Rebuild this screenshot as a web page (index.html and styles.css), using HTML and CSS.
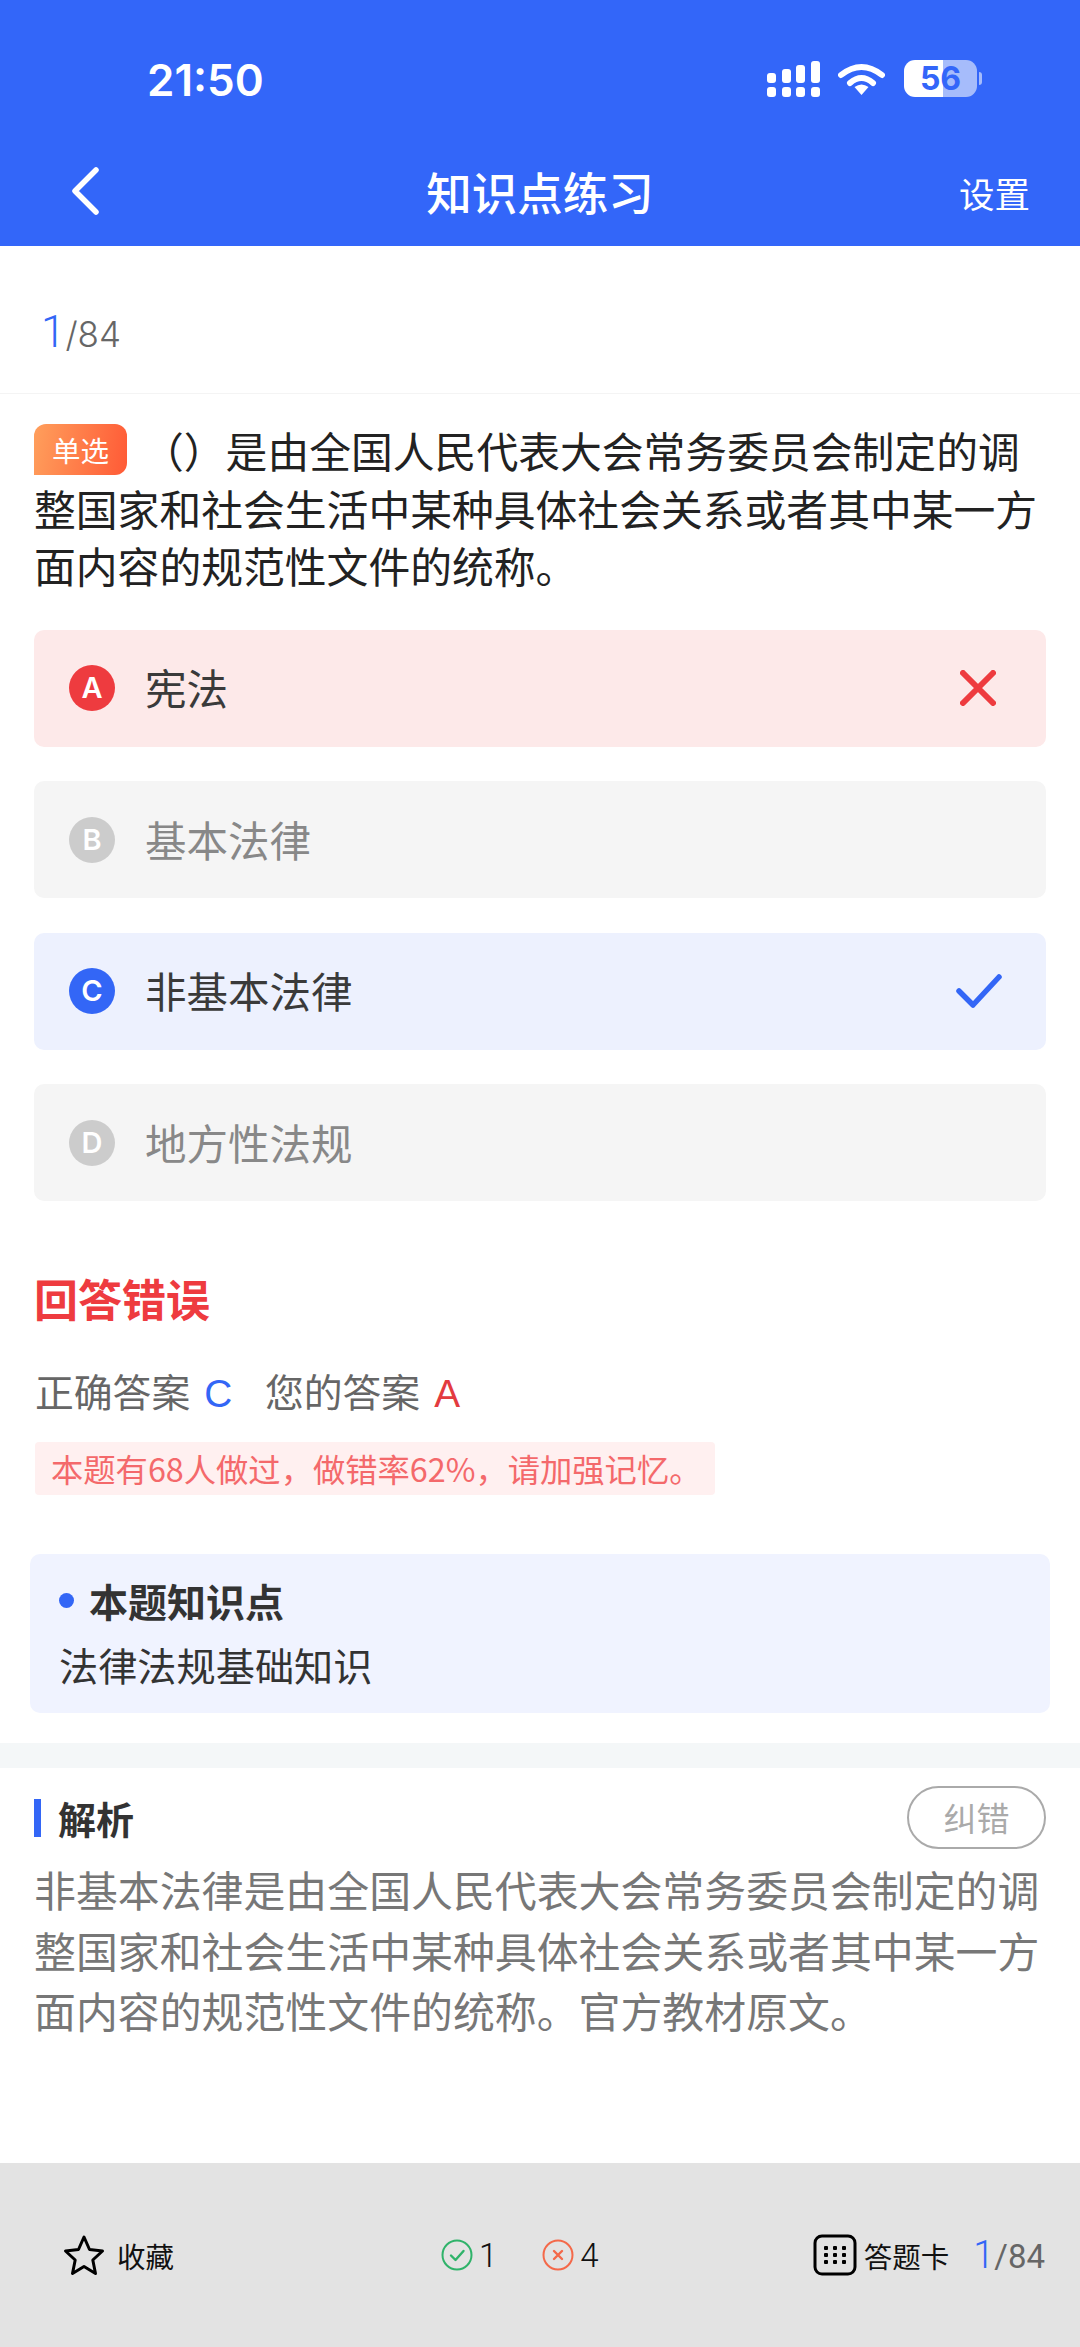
FILE: index.html
```html
<!DOCTYPE html>
<html>
<head>
    <title>知识点练习</title>
    <link rel="stylesheet" href="styles.css">
</head>
<body>
    <div class="page">
        <div class="header">
            <div class="status">
                <span class="time">21:50</span>
                <div class="status-icons">
                    <div class="signal">
                        <div class="signal-row tall">
                            <i class="h1"></i><i class="h2"></i><i class="h3"></i><i class="h4"></i>
                        </div>
                        <div class="signal-row">
                            <i></i><i></i><i></i><i></i>
                        </div>
                    </div>
                    <svg class="wifi" viewBox="0 0 47 33">
                        <path d="M3 13 Q23.5 -3 44 13" fill="none" stroke="#fff" stroke-width="6" stroke-linecap="round"/>
                        <path d="M12 21 Q23.5 11 35 21" fill="none" stroke="#fff" stroke-width="6" stroke-linecap="round"/>
                        <path d="M16.5 25 Q23.5 20 30.5 25 L23.5 33 Z" fill="#fff"/>
                    </svg>
                    <div class="battery"><span>56</span></div>
                    <div class="battery-tip"></div>
                </div>
            </div>
            <div class="nav">
                <svg class="back" viewBox="0 0 30 48">
                    <path d="M26 3 L5 24 L26 45" fill="none" stroke="#fff" stroke-width="5.5" stroke-linecap="round" stroke-linejoin="round"/>
                </svg>
                <div class="nav-title">知识点练习</div>
                <div class="nav-right">设置</div>
            </div>
        </div>

        <div class="counter"><span class="cur">1</span>/84</div>

        <div class="question"><span class="tag">单选</span>（）是由全国人民代表大会常务委员会制定的调整国家和社会生活中某种具体社会关系或者其中某一方面内容的规范性文件的统称。</div>

        <div class="options">
            <div class="option wrong">
                <span class="badge">A</span>
                <span class="option-text">宪法</span>
                <svg class="mark" viewBox="0 0 36 36">
                    <path d="M3 3 L33 33 M33 3 L3 33" fill="none" stroke="#ee3b3f" stroke-width="6" stroke-linecap="round"/>
                </svg>
            </div>
            <div class="option muted">
                <span class="badge">B</span>
                <span class="option-text">基本法律</span>
            </div>
            <div class="option right">
                <span class="badge">C</span>
                <span class="option-text">非基本法律</span>
                <svg class="mark check" viewBox="0 0 46 36">
                    <path d="M3 18 L17 32 L43 4" fill="none" stroke="#3366f6" stroke-width="5.5" stroke-linecap="round" stroke-linejoin="round"/>
                </svg>
            </div>
            <div class="option muted">
                <span class="badge">D</span>
                <span class="option-text">地方性法规</span>
            </div>
        </div>

        <div class="result">回答错误</div>
        <div class="answers">
            <span>正确答案</span><b class="blue">C</b>
            <span class="second">您的答案</span><b class="red">A</b>
        </div>
        <div class="notice">本题有68人做过，做错率62%，请加强记忆。</div>

        <div class="knowledge">
            <div class="knowledge-title"><i class="dot"></i>本题知识点</div>
            <div class="knowledge-text">法律法规基础知识</div>
        </div>

        <div class="band"></div>

        <div class="analysis">
            <div class="analysis-head">
                <div class="analysis-title">解析</div>
                <div class="report">纠错</div>
            </div>
            <div class="analysis-text">非基本法律是由全国人民代表大会常务委员会制定的调整国家和社会生活中某种具体社会关系或者其中某一方面内容的规范性文件的统称。官方教材原文。</div>
        </div>

        <div class="bottom">
            <div class="bottom-item fav">
                <svg class="star" viewBox="0 0 42 42">
                    <path d="M21 3 L26.5 15.5 L39.5 17 L29.8 26 L32.5 39.5 L21 32.5 L9.5 39.5 L12.2 26 L2.5 17 L15.5 15.5 Z" fill="none" stroke="#000" stroke-width="3" stroke-linejoin="round"/>
                </svg>
                <span>收藏</span>
            </div>
            <div class="scores">
                <div class="bottom-item">
                    <svg class="score-icon" viewBox="0 0 32 32">
                        <circle cx="16" cy="16" r="14.5" fill="none" stroke="#2fb36a" stroke-width="2"/>
                        <path d="M10 16.5 L14.5 21 L22.5 12" fill="none" stroke="#2fb36a" stroke-width="2.4" stroke-linecap="round" stroke-linejoin="round"/>
                    </svg>
                    <span class="score">1</span>
                </div>
                <div class="bottom-item">
                    <svg class="score-icon" viewBox="0 0 32 32">
                        <circle cx="16" cy="16" r="14.5" fill="none" stroke="#f4694a" stroke-width="2"/>
                        <path d="M12 12 L20 20 M20 12 L12 20" fill="none" stroke="#f4694a" stroke-width="2.4" stroke-linecap="round"/>
                    </svg>
                    <span class="score">4</span>
                </div>
            </div>
            <div class="bottom-item card">
                <svg class="grid" viewBox="0 0 44 42">
                    <rect x="2" y="2" width="40" height="38" rx="7" fill="none" stroke="#000" stroke-width="3"/>
                    <g fill="#000">
                        <rect x="11" y="12" width="4" height="4" rx="1"/><rect x="20" y="12" width="4" height="4" rx="1"/><rect x="29" y="12" width="4" height="4" rx="1"/>
                        <rect x="11" y="19" width="4" height="4" rx="1"/><rect x="20" y="19" width="4" height="4" rx="1"/><rect x="29" y="19" width="4" height="4" rx="1"/>
                        <rect x="11" y="26" width="4" height="4" rx="1"/><rect x="20" y="26" width="4" height="4" rx="1"/><rect x="29" y="26" width="4" height="4" rx="1"/>
                    </g>
                </svg>
                <span>答题卡</span>
            </div>
            <div class="bottom-count"><span class="cur">1</span>/84</div>
        </div>
    </div>
</body>
</html>
```

FILE: styles.css
```css
* {
    box-sizing: border-box;
}
body {
    margin: 0;
    padding: 0;
    background-color: #fff;
    font-family: "Noto Sans CJK SC", "Noto Sans", sans-serif;
}
.page {
    width: 1080px;
    height: 2347px;
    display: flex;
    flex-direction: column;
    overflow: hidden;
}

.header {
    height: 246px;
    background-color: #3366f9;
    color: #fff;
}
.status {
    height: 146px;
    padding: 60px 98px 0 147px;
    display: flex;
    justify-content: space-between;
    align-items: flex-start;
}
.time {
    font-family: Inter, sans-serif;
    font-size: 44px;
    font-weight: 600;
    line-height: 40px;
}
.status-icons {
    display: flex;
    align-items: center;
}
.signal {
    width: 53px;
    margin-right: 18px;
}
.signal-row {
    display: flex;
    justify-content: space-between;
    align-items: flex-end;
}
.signal-row i {
    width: 9px;
    height: 10px;
    border-radius: 3px;
    background-color: #fff;
}
.signal-row.tall {
    height: 22px;
    margin-bottom: 4px;
}
.signal-row .h1 { height: 10px; }
.signal-row .h2 { height: 14px; }
.signal-row .h3 { height: 18px; }
.signal-row .h4 { height: 22px; }
.wifi {
    width: 47px;
    height: 33px;
    margin-right: 19px;
}
.battery {
    width: 73px;
    height: 37px;
    border-radius: 11px;
    background: linear-gradient(90deg, #fff 54%, #a6bcfb 54%);
    color: #3366f9;
    font-family: Inter, sans-serif;
    font-size: 32px;
    font-weight: 700;
    line-height: 37px;
    text-align: center;
}
.battery-tip {
    width: 3px;
    height: 13px;
    margin-left: 2px;
    border-radius: 0 3px 3px 0;
    background-color: #a6bcfb;
}
.nav {
    height: 90px;
    padding: 0 50px 0 70px;
    display: flex;
    justify-content: space-between;
    align-items: center;
    position: relative;
}
.back {
    width: 30px;
    height: 48px;
}
.nav-title {
    position: absolute;
    left: 0;
    right: 0;
    text-align: center;
    font-size: 45.5px;
    font-weight: 500;
}
.nav-right {
    font-size: 35.5px;
    margin-top: 2px;
}

.counter {
    height: 148px;
    padding: 58px 0 0 41px;
    border-bottom: 1px solid #f4f4f4;
    color: #666;
    font-family: Inter, sans-serif;
    font-size: 35px;
    font-weight: 300;
    line-height: 56px;
}
.cur {
    color: #3366f6;
    font-family: Roboto, sans-serif;
    font-size: 44px;
    font-weight: 300;
}

.question {
    margin: 28px 34px 0;
    color: #222;
    font-size: 41.8px;
    line-height: 57.5px;
}
.tag {
    display: inline-block;
    width: 93px;
    height: 51px;
    margin: 2px 15px 0 0;
    border-radius: 12px 12px 12px 0;
    background: linear-gradient(100deg, #ff9f5c, #ff5a36);
    color: #fff;
    font-size: 28.5px;
    line-height: 51px;
    text-align: center;
    vertical-align: top;
}

.options {
    margin: 35px 34px 0;
    display: flex;
    flex-direction: column;
    gap: 34.6px;
}
.option {
    height: 117px;
    padding: 0 50px 0 35px;
    border-radius: 10px;
    display: flex;
    align-items: center;
    font-size: 41.5px;
}
.badge {
    width: 46px;
    height: 46px;
    margin-right: 30px;
    border-radius: 50%;
    color: #fff;
    font-family: Inter, sans-serif;
    font-size: 29px;
    font-weight: 600;
    line-height: 46px;
    text-align: center;
}
.option-text {
    flex: 1;
    margin-top: -2px;
    color: #3a3a3a;
}
.mark {
    width: 36px;
    height: 36px;
}
.mark.check {
    width: 46px;
    margin-right: -6px;
}
.wrong {
    background-color: #fde9e9;
}
.wrong .badge {
    background-color: #ee3b3f;
}
.muted {
    background-color: #f5f5f5;
}
.muted .badge {
    background-color: #ccc;
}
.muted .option-text {
    color: #888;
}
.right {
    background-color: #edf1fe;
}
.right .badge {
    background-color: #3366f6;
}

.result {
    margin: 67px 34px 0;
    color: #ee3b3f;
    font-size: 44px;
    font-weight: 700;
    line-height: 60px;
}
.answers {
    margin: 37px 35px 0;
    color: #666;
    font-size: 38.8px;
    line-height: 50px;
}
.answers b {
    margin-left: 14px;
    font-family: "Liberation Sans", sans-serif;
    font-weight: 400;
}
.answers .second {
    margin-left: 24px;
}
.blue {
    color: #3366f6;
}
.red {
    color: #e33b3f;
}
.notice {
    width: 680px;
    height: 53px;
    margin: 23px 0 0 35px;
    padding-left: 16px;
    border-radius: 4px;
    background-color: #fff0f0;
    color: #f4696b;
    font-size: 32.3px;
    line-height: 53px;
    white-space: nowrap;
}

.knowledge {
    height: 159px;
    margin: 59px 30px 0;
    padding: 20px 30px 0 29px;
    border-radius: 10px;
    background-color: #f0f3ff;
}
.knowledge-title {
    display: flex;
    align-items: center;
    color: #333;
    font-size: 39px;
    font-weight: 700;
    line-height: 52px;
}
.dot {
    width: 15px;
    height: 15px;
    margin-right: 15px;
    border-radius: 50%;
    background-color: #3366f6;
}
.knowledge-text {
    margin-top: 10px;
    color: #333;
    font-size: 39.2px;
    line-height: 56px;
}

.band {
    height: 25px;
    margin-top: 30px;
    background-color: #f4f7f8;
}

.analysis {
    padding: 18px 34px 0;
}
.analysis-head {
    display: flex;
    justify-content: space-between;
    align-items: center;
}
.analysis-title {
    padding-left: 17px;
    border-left: 7px solid #3366f6;
    color: #333;
    font-size: 38px;
    font-weight: 700;
    line-height: 38px;
}
.report {
    width: 139px;
    height: 63px;
    border: 2px solid #aaa;
    border-radius: 32px;
    color: #aaa;
    font-size: 33px;
    line-height: 58px;
    text-align: center;
}
.analysis-text {
    margin-top: 10px;
    color: #777;
    font-size: 41.9px;
    line-height: 60.5px;
}

.bottom {
    height: 184px;
    margin-top: auto;
    padding: 71px 35px 0 63px;
    background-color: #e3e3e3;
    display: flex;
    align-items: flex-start;
}
.bottom-item {
    display: flex;
    align-items: center;
    height: 42px;
    color: #111;
    font-size: 28.5px;
}
.star {
    width: 42px;
    height: 42px;
    margin-right: 12px;
}
.scores {
    margin-left: 267px;
    display: flex;
    gap: 45px;
}
.score-icon {
    width: 32px;
    height: 32px;
    margin-right: 6px;
}
.score {
    font-family: Roboto, sans-serif;
    font-weight: 300;
    font-size: 33px;
}
.card {
    margin-left: auto;
}
.grid {
    width: 44px;
    height: 42px;
    margin-right: 7px;
}
.bottom-count {
    margin-left: 24px;
    color: #666;
    font-family: Roboto, sans-serif;
    font-size: 33px;
    line-height: 42px;
}
.bottom-count .cur {
    font-size: 38px;
}
```
